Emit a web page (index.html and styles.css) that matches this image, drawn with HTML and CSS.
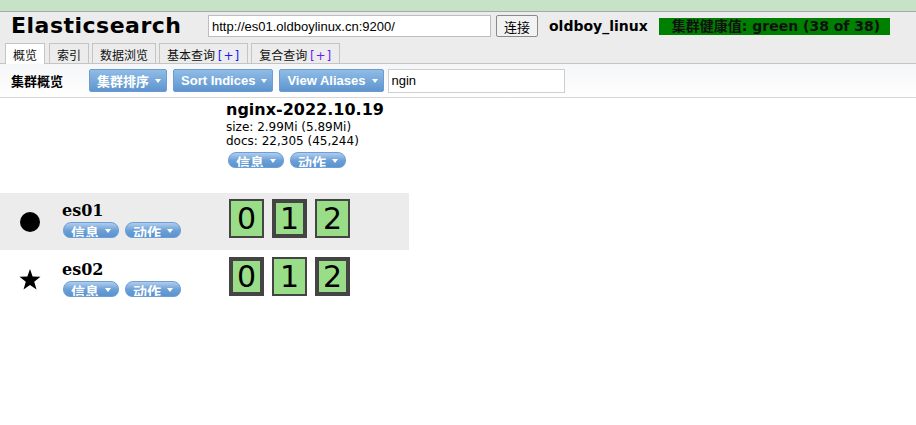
FILE: index.html
```
<!DOCTYPE html>
<html lang="zh">
<head>
<meta charset="utf-8">
<title>Elasticsearch Head</title>
<link rel="stylesheet" href="styles.css">
</head>
<body>
<div class="topstrip"></div>
<header class="header">
  <div class="header-row">
    <h1 class="brand">Elasticsearch</h1>
    <input class="url" type="text" value="http://es01.oldboylinux.cn:9200/">
    <button class="connect">连接</button>
    <span class="cluster-name">oldboy_linux</span>
    <span class="health">集群健康值: green (38 of 38)</span>
  </div>
  <nav class="tabs">
    <span class="tab active">概览</span>
    <span class="tab">索引</span>
    <span class="tab">数据浏览</span>
    <span class="tab">基本查询 <span class="plus">[+]</span></span>
    <span class="tab">复合查询 <span class="plus plus2">[+]</span></span>
  </nav>
</header>
<div class="toolbar">
  <span class="toolbar-title">集群概览</span>
  <span class="btn">集群排序<i class="caret"></i></span>
  <span class="btn">Sort Indices<i class="caret"></i></span>
  <span class="btn">View Aliases<i class="caret"></i></span>
  <input class="filter" type="text" value="ngin">
</div>
<main class="cluster">
  <div class="row head-row">
    <div class="cell icon-cell"></div>
    <div class="cell name-cell"></div>
    <div class="cell index-cell">
      <div class="index-name">nginx-2022.10.19</div>
      <div class="meta">size: 2.99Mi (5.89Mi)</div>
      <div class="meta">docs: 22,305 (45,244)</div>
      <div class="pills">
        <span class="pill">信息<i class="caret"></i></span>
        <span class="pill">动作<i class="caret"></i></span>
      </div>
    </div>
  </div>
  <div class="row node-row shaded">
    <div class="cell icon-cell">
      <svg width="20" height="20" viewBox="0 0 20 20"><circle cx="10" cy="10" r="10" fill="#000"/></svg>
    </div>
    <div class="cell name-cell">
      <div class="node-name">es01</div>
      <div class="pills">
        <span class="pill">信息<i class="caret"></i></span>
        <span class="pill">动作<i class="caret"></i></span>
      </div>
    </div>
    <div class="cell shards">
      <span class="shard">0</span>
      <span class="shard primary">1</span>
      <span class="shard">2</span>
    </div>
  </div>
  <div class="row node-row">
    <div class="cell icon-cell">
      <svg width="22" height="21" viewBox="0 0 22 21"><polygon points="11,0 13.6,7.6 21.5,7.8 15.2,12.7 17.5,20.5 11,15.9 4.5,20.5 6.8,12.7 0.5,7.8 8.4,7.6" fill="#000"/></svg>
    </div>
    <div class="cell name-cell">
      <div class="node-name">es02</div>
      <div class="pills">
        <span class="pill">信息<i class="caret"></i></span>
        <span class="pill">动作<i class="caret"></i></span>
      </div>
    </div>
    <div class="cell shards">
      <span class="shard primary">0</span>
      <span class="shard">1</span>
      <span class="shard primary">2</span>
    </div>
  </div>
</main>
</body>
</html>
```
FILE: styles.css
```
* { box-sizing: border-box; }
body {
  margin: 0;
  font-family: "DejaVu Sans", Verdana, "Noto Sans CJK SC", sans-serif;
  font-size: 12px;
  color: #000;
  background: #fff;
}
.topstrip {
  height: 11px;
  background: #c6e2c7;
  border-bottom: 1px solid #a8a8a8;
  box-sizing: content-box;
}
.header {
  background: #ececec;
  border-bottom: 1px solid #c4c4c4;
}
.header-row {
  display: flex;
  align-items: center;
  height: 28px;
}
.brand {
  margin: 0 0 0 11px;
  width: 197px;
  font-size: 22px;
  font-weight: bold;
  letter-spacing: 0.5px;
  line-height: 28px;
}
.url {
  width: 283px;
  height: 22px;
  margin: 0;
  padding: 0 3px;
  border: 1px solid #bdbdbd;
  font-family: "Liberation Sans", Arial, sans-serif;
  font-size: 13px;
  background: #fff;
  color: #000;
}
.connect {
  margin-left: 5px;
  width: 42px;
  height: 22px;
  padding: 0;
  border: 1px solid #8a8a8a;
  border-radius: 2px;
  background: #f2f2f2;
  font-family: "Noto Sans CJK SC", sans-serif;
  font-size: 13px;
  color: #000;
}
.cluster-name {
  margin-left: 11px;
  font-weight: bold;
  font-size: 14px;
}
.health {
  margin-left: 11px;
  width: 231px;
  height: 17px;
  background: #008000;
  padding-left: 13px;
  font-weight: bold;
  font-size: 14px;
  line-height: 17px;
  color: #111;
  white-space: nowrap;
}
.tabs {
  display: flex;
  gap: 3px;
  padding-left: 5px;
  margin-top: 3px;
  margin-bottom: -1px;
}
.tab {
  height: 20px;
  padding: 0 7px;
  border: 1px solid #c4c4c4;
  border-bottom: none;
  background: #ececec;
  font-family: "Noto Sans CJK SC", sans-serif;
  font-size: 12px;
  line-height: 21px;
  color: #111;
}
.tab.active {
  background: #fff;
  height: 21px;
  margin-right: 1px;
  position: relative;
}
.plus {
  font-family: "DejaVu Sans", sans-serif;
  color: #1a1aff;
  letter-spacing: 1px;
}
.plus2 { color: #6a1aff; }
.toolbar {
  display: flex;
  align-items: center;
  height: 34px;
  padding-left: 11px;
  background: linear-gradient(#f4f6f7, #fbfbfb 60%, #ffffff);
  border-bottom: 1px solid #d6d6d6;
}
.toolbar-title {
  font-family: "Noto Sans CJK SC", sans-serif;
  font-weight: bold;
  font-size: 13px;
  width: 78px;
}
.btn {
  display: flex;
  align-items: center;
  height: 23px;
  margin-right: 6px;
  padding: 0 5px 0 7px;
  border: 1px solid #6f9bd0;
  border-radius: 2px;
  background: linear-gradient(#90bce6, #5e95cf);
  color: #fff;
  font-family: "Liberation Sans", "Noto Sans CJK SC", sans-serif;
  font-weight: bold;
  font-size: 13px;
  white-space: nowrap;
}
.caret {
  display: inline-block;
  width: 0;
  height: 0;
  margin-left: 6px;
  border-left: 3.5px solid transparent;
  border-right: 3.5px solid transparent;
  border-top: 4px solid #fff;
}
.filter {
  width: 177px;
  height: 24px;
  margin: 0 0 0 -2px;
  padding: 0 3px;
  border: 1px solid #cfcfcf;
  font-family: "Liberation Sans", Arial, sans-serif;
  font-size: 13px;
  color: #000;
  background: #fff;
}
.cluster {
  width: 409px;
  display: flex;
  flex-direction: column;
}
.row {
  display: grid;
  grid-template-columns: 60px 167px 182px;
}
.head-row { height: 95px; }
.node-row { height: 57px; }
.node-row + .node-row { height: 58px; }
.shaded { background: #ececec; }
.icon-cell {
  display: flex;
  align-items: center;
  justify-content: center;
}
.index-cell { padding-top: 1px; }
.index-name {
  font-weight: bold;
  font-size: 16px;
  line-height: 21px;
  margin-left: -1px;
}
.meta {
  line-height: 14px;
  margin-left: -1px;
}
.pills {
  display: flex;
  gap: 6px;
  margin-top: 4px;
  margin-left: 1px;
}
.pill {
  display: flex;
  align-items: flex-start;
  justify-content: center;
  height: 16px;
  width: 56px;
  overflow: hidden;
  padding-top: 0;
  border: 1px solid #6d9fd6;
  border-radius: 8px 8px 7px 7px;
  background: linear-gradient(#b1cdee, #6a9fd6 55%, #5b93cf);
  color: #fff;
  font-family: "Noto Sans CJK SC", sans-serif;
  font-weight: bold;
  font-size: 14px;
  line-height: 18px;
  white-space: nowrap;
}
.pill .caret { margin-top: 6px; margin-left: 6px; }
.name-cell { padding: 8px 0 0 2px; }
.node-row + .node-row .name-cell { padding-top: 10px; }
.node-name {
  font-family: "DejaVu Serif", serif;
  font-weight: bold;
  font-size: 16px;
  line-height: 20px;
}
.name-cell .pills { margin-top: 1px; margin-left: 1px; }
.shards {
  display: flex;
  gap: 8px;
  padding: 6px 0 0 2px;
}
.node-row + .node-row .shards { padding-top: 7px; }
.shard {
  width: 35px;
  height: 39px;
  border: 2px solid #444;
  background: #99dd88;
  font-size: 30px;
  line-height: 35px;
  text-align: center;
  color: #000;
}
.shard.primary {
  border-width: 4px;
  line-height: 31px;
}
```
